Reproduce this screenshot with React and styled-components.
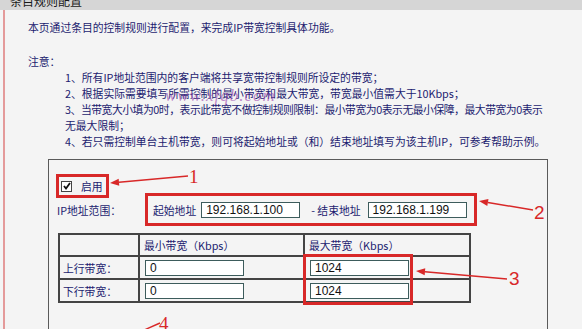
import React from 'react';
import styled, { createGlobalStyle } from 'styled-components';

const Global = createGlobalStyle`
  html, body {
    margin: 0;
    padding: 0;
    background: #f4f4f4;
  }
  body {
    font-family: "Noto Sans CJK SC", "DejaVu Sans", sans-serif;
    font-size: 10.8px;
    color: #1c1c70;
  }
`;

const RED = '#d82828';

// page frame
const Page = styled.div`
  position: relative;
  width: 582px;
  height: 329px;
  overflow: hidden;
  background: #f4f4f4;
`;

const TitleBar = styled.div`
  height: 10px;
  background: #d6d6d6;
  overflow: hidden;
  padding-left: 10px;
  line-height: 10px;
`;

const TitleText = styled.span`
  display: block;
  margin-top: -4px;
  font-size: 12px;
  color: #1a1a1a;
`;

const Main = styled.div`
  margin-left: 3px;
  border-left: 2px solid #e49a9a;
  padding: 9px 0 0 23px;
  height: 400px;
`;

const Line = styled.div`
  line-height: 16px;
  height: 16px;
  white-space: nowrap;
  letter-spacing: ${p => (p.tight ? '-0.45px' : '0')};
`;

const NoteTitle = styled(Line)`
  margin-top: 18px;
`;

const NoteList = styled.div`
  padding-left: 37px;
`;

// settings box
const Box = styled.div`
  margin: 10px 0 0 20px;
  width: 498px;
  height: 200px;
  border: 1px solid #5a5a5a;
  display: flex;
  flex-direction: column;
`;

const EnableLabel = styled.label`
  display: flex;
  align-items: center;
  gap: 9px;
  align-self: flex-start;
  height: 14px;
  margin: 19px 0 0 12px;
  padding-right: 1px;
  white-space: nowrap;
  outline: 3px solid ${RED};
  outline-offset: 2px;
`;

const Check = styled.span`
  width: 9px;
  height: 9px;
  border: 1px solid #444;
  background: #fff;
  display: flex;
  align-items: center;
  justify-content: center;
`;

const IpRow = styled.div`
  display: flex;
  align-items: center;
  margin-left: 8px;
`;

const IpLabel = styled.span`
  width: 88px;
  white-space: nowrap;
`;

const RangeWrap = styled.div`
  display: flex;
  align-items: center;
  box-sizing: border-box;
  width: 332px;
  height: 33px;
  border: 3px solid ${RED};
  padding-left: 5px;
  white-space: nowrap;
`;

const Gap = styled.span`
  display: inline-block;
  width: ${p => p.w}px;
`;

const Field = styled.div`
  box-sizing: border-box;
  width: 99px;
  height: 16px;
  border: 1px solid #3d5c5c;
  background: #fff;
  font-family: "Liberation Sans", Arial, sans-serif;
  font-size: 12px;
  line-height: 14px;
  color: #111;
  padding-left: 4px;
`;

const TableWrap = styled.div`
  position: relative;
  margin: 7px 0 0 9px;
  width: 411px;
`;

const Grid = styled.table`
  border-collapse: collapse;
  width: 411px;
  table-layout: fixed;
  border: 2px solid #444;
`;

const Cell = styled.td`
  border: 2px solid #444;
  padding: 0 0 0 ${p => p.pad || 3}px;
  height: ${p => p.h || 21}px;
  white-space: nowrap;
  vertical-align: middle;
`;

const CellField = styled(Field)`
  margin-left: 2px;
`;

const Highlight = styled.div`
  position: absolute;
  left: 245px;
  top: 21px;
  width: 110px;
  height: 51px;
  box-sizing: border-box;
  border: 3px solid ${RED};
`;

// overlays
const Watermark = styled.span`
  position: absolute;
  left: 165px;
  top: 86px;
  font-family: "Liberation Serif", serif;
  font-style: italic;
  font-size: 17px;
  letter-spacing: 1px;
  color: rgba(150, 60, 170, 0.6);
  pointer-events: none;
`;

const Marks = styled.svg`
  position: absolute;
  left: 0;
  top: 0;
  pointer-events: none;
`;

const Num = styled.span`
  position: absolute;
  left: ${p => p.x}px;
  top: ${p => p.y}px;
  font-family: ${p => (p.serif ? '"Liberation Serif", serif' : '"Liberation Sans", Arial, sans-serif')};
  font-size: 19px;
  line-height: 19px;
  color: ${RED};
`;

function Arrow({ tip, tail, head = true }) {
  const [tx, ty] = tip;
  const [ex, ey] = tail;
  const len = Math.hypot(ex - tx, ey - ty);
  const dx = (ex - tx) / len;
  const dy = (ey - ty) / len;
  const bx = tx + dx * 9;
  const by = ty + dy * 9;
  const px = -dy * 3.5;
  const py = dx * 3.5;
  return (
    <g>
      <line x1={head ? bx : tx} y1={head ? by : ty} x2={ex} y2={ey} stroke={RED} strokeWidth="1.4" />
      {head && (
        <polygon
          points={`${tx},${ty} ${bx + px},${by + py} ${bx - px},${by - py}`}
          fill={RED}
        />
      )}
    </g>
  );
}

const notes = [
  { text: '1、所有IP地址范围内的客户端将共享宽带控制规则所设定的带宽；' },
  { text: '2、根据实际需要填写所需控制的最小带宽和最大带宽，带宽最小值需大于10Kbps；' },
  { text: '3、当带宽大小填为0时，表示此带宽不做控制规则限制：最小带宽为0表示无最小保障，最大带宽为0表示', tight: true },
  { text: '无最大限制；' },
  { text: '4、若只需控制单台主机带宽，则可将起始地址或（和）结束地址填写为该主机IP，可参考帮助示例。' },
];

const rows = [
  { label: '上行带宽：', min: '0', max: '1024' },
  { label: '下行带宽：', min: '0', max: '1024' },
];

export default function App() {
  return (
    <Page>
      <Global />
      <TitleBar>
        <TitleText>条目规则配置</TitleText>
      </TitleBar>
      <Main>
        <Line>本页通过条目的控制规则进行配置，来完成IP带宽控制具体功能。</Line>
        <NoteTitle>注意：</NoteTitle>
        <NoteList>
          {notes.map(n => (
            <Line key={n.text} tight={n.tight}>{n.text}</Line>
          ))}
        </NoteList>
        <Box>
          <EnableLabel>
            <Check>
              <svg width="8" height="8" viewBox="0 0 8 8">
                <polyline points="1,4 3,6.5 7,1" fill="none" stroke="#111" strokeWidth="1.8" />
              </svg>
            </Check>
            启用
          </EnableLabel>
          <IpRow>
            <IpLabel>IP地址范围：</IpLabel>
            <RangeWrap>
              起始地址
              <Gap w={5} />
              <Field>192.168.1.100</Field>
              <Gap w={11} />
              - 结束地址
              <Gap w={7} />
              <Field>192.168.1.199</Field>
            </RangeWrap>
          </IpRow>
          <TableWrap>
            <Grid>
              <colgroup>
                <col style={{ width: 80 }} />
                <col style={{ width: 165 }} />
                <col style={{ width: 166 }} />
              </colgroup>
              <tbody>
                <tr>
                  <Cell h={20} />
                  <Cell h={20} pad={4}>最小带宽（Kbps）</Cell>
                  <Cell h={20} pad={4}>最大带宽（Kbps）</Cell>
                </tr>
                {rows.map(r => (
                  <tr key={r.label}>
                    <Cell h={21}>{r.label}</Cell>
                    <Cell h={21}><CellField>{r.min}</CellField></Cell>
                    <Cell h={21}><CellField>{r.max}</CellField></Cell>
                  </tr>
                ))}
              </tbody>
            </Grid>
            <Highlight />
          </TableWrap>
        </Box>
      </Main>

      <Watermark>www.xfqb.com</Watermark>
      <Marks width="582" height="329" viewBox="0 0 582 329">
        <Arrow tip={[110, 183]} tail={[188, 176]} />
        <Arrow tip={[479, 201]} tail={[533, 210]} />
        <Arrow tip={[416, 271]} tail={[507, 279]} />
        <Arrow tip={[142, 331]} tail={[160, 323]} head={false} />
      </Marks>
      <Num x={189} y={167} serif>1</Num>
      <Num x={534} y={203}>2</Num>
      <Num x={509} y={269}>3</Num>
      <Num x={159} y={314} serif>4</Num>
    </Page>
  );
}
